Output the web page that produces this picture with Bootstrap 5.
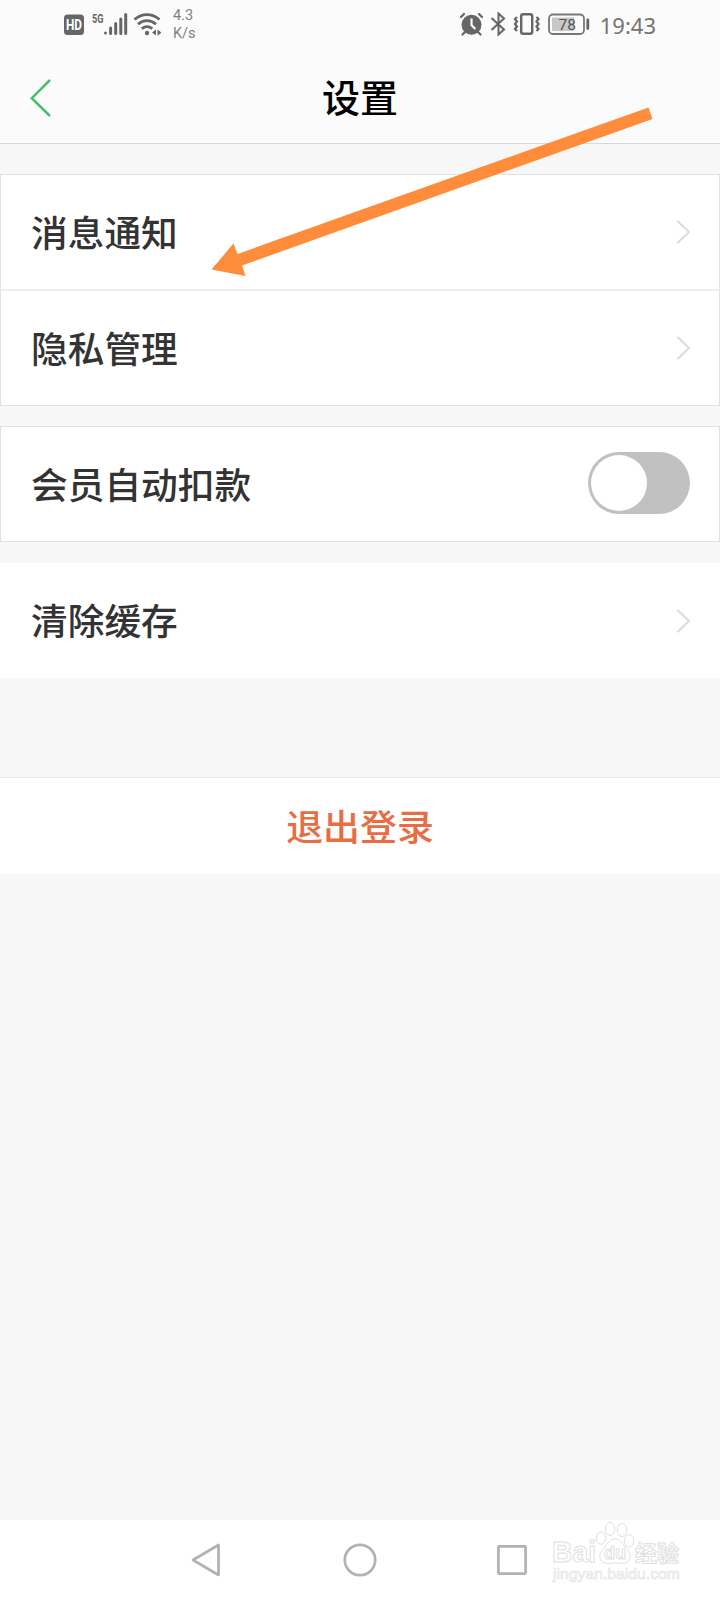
<!DOCTYPE html>
<html lang="zh-CN">
<head>
<meta charset="utf-8">
<meta name="viewport" content="width=device-width, initial-scale=1">
<title>设置</title>
<link rel="stylesheet" href="https://cdn.jsdelivr.net/npm/bootstrap@5.3.0/dist/css/bootstrap.min.css">
<style>
  body { background: #f7f7f7; font-family: "Liberation Sans", "Noto Sans CJK SC", sans-serif; color: #333; }
  .phone { width: 720px; height: 1600px; overflow: hidden; }
  svg { display: block; flex: none; }
  .top-area { background: #fbfbfb; border-bottom: 1px solid #d8d8d8; height: 144px; }
  .status-bar { height: 48px; padding: 0 64px 0 63px; color: #666; }
  .net-speed { font: 14.5px/18px Roboto, sans-serif; color: #808080; margin: 1px 0 0 12px; }
  .clock { font: 22px/48px "Noto Sans", sans-serif; color: #737373; margin: 2px 0 0 10px; }
  .title-bar { height: 95px; padding: 0 29px; }
  .page-title { font-size: 38px; line-height: 56px; color: #000; font-weight: 500; margin: 23px 0 0; }
  .group { border: 1px solid #e2e2e2; border-radius: 0; background: #fff; }
  .group .list-group-item { border: 0; border-radius: 0; height: 114px; padding: 0 29px 0 30px; font-size: 36.7px; line-height: 54px; color: #333; font-weight: 500; background: #fff; }
  .group .list-group-item + .list-group-item { border-top: 2px solid #ededed; height: 116px; }
  .group.edgeless { border: 0; }
  .group.edgeless .list-group-item { height: 115px; padding: 0 30px 0 31px; }
  .row-label { padding-top: 5px; }
  .toggle { width: 102px; height: 62px; border-radius: 31px; background: #c1c1c1; padding: 3px; margin-top: -2px; }
  .knob { width: 56px; height: 56px; border-radius: 50%; background: #fff; }
  .logout { height: 97px; border: 0; border-top: 1px solid #e7e7e7; border-radius: 0; background: #fff; color: #e96d43; font-size: 36.9px; font-weight: 500; line-height: 54px; padding: 5px 0 0; }
  .logout:hover { color: #e96d43; background: #fff; }
  .nav-area { height: 80px; background: #fff; padding-left: 191px; }
  .arrow-mark { left: 205px; top: 100px; }
  .watermark { left: 548px; top: 1518px; }
</style>
</head>
<body>
<div class="phone position-relative d-flex flex-column">
  <header class="top-area">
    <div class="status-bar d-flex align-items-center">
      <svg width="98" height="30" viewBox="63 9 98 30" fill="none" stroke="#666">
        <rect x="64" y="14.500" width="20" height="20.500" rx="3.500" fill="#666" stroke="none"/>
        <text x="66" y="30" font-family="Roboto" font-weight="700" font-size="14" textLength="16" lengthAdjust="spacingAndGlyphs" fill="#fff" stroke="none">HD</text>
        <text x="92" y="22.500" font-family="Roboto" font-weight="700" font-size="12.500" textLength="11.500" lengthAdjust="spacingAndGlyphs" fill="#666" stroke="none">5G</text>
        <g stroke-width="3" stroke-linecap="round"><path d="M105.500 33v.1M110.600 28v5.500M115.700 23.500v10M120.800 19v14.500M125.700 14.500v19"/></g>
        <g stroke-width="2.700"><path d="M134.500 19.500c7.500-6.500 17.500-6.500 25 0M138 24.200c5.500-4.800 12.500-4.800 18 0M141.800 28.600c3.300-2.600 7.200-2.600 10.500 0"/></g>
        <circle cx="147" cy="33" r="2.200" fill="#666" stroke="none"/>
        <path d="M156 29.500v6l-4-3zM157.500 29.500v6l4-3z" fill="#666" stroke="none"/>
      </svg>
      <div class="net-speed">4.3<br>K/s</div>
      <div class="ms-auto d-flex align-items-center">
        <svg width="131" height="30" viewBox="459 9 131 30" fill="none" stroke="#666">
          <circle cx="471.500" cy="24.800" r="10" fill="#666" stroke="none"/>
          <path d="M461 17l3-3M482 17l-3-3M465 32l-2.500 2.500M478 32l2.500 2.500" stroke-width="2.300" stroke-linecap="round"/>
          <path d="M471.500 18.500v6.500l3.800 4" stroke="#fbfbfb" stroke-width="2.200"/>
          <path d="M491.500 18l12.500 11.500-5.500 5v-21l5.500 5-12.500 11.500" stroke-width="2"/>
          <rect x="521.200" y="14.300" width="11" height="19.400" rx="2" stroke-width="2.400"/>
          <path d="M517 17l-2 2 2 2.500-2 2.500 2 2.500-2 2.500 2 2M536.500 17l2 2-2 2.500 2 2.500-2 2.500 2 2.500-2 2" stroke-width="2.200"/>
          <rect x="549" y="14.500" width="35" height="19.500" rx="4" stroke-width="1.800" stroke="#777"/>
          <rect x="552" y="17.500" width="22" height="13.500" fill="#c8c8c8" stroke="none"/>
          <path d="M587.800 20v8.500" stroke-width="2.800" stroke-linecap="round"/>
          <text x="567.200" y="29.700" text-anchor="middle" font-family="Roboto" font-size="15.500" fill="#555" stroke="none">78</text>
        </svg>
        <span class="clock">19:43</span>
      </div>
    </div>
    <div class="title-bar d-flex justify-content-between">
      <svg class="mt-4" width="24" height="50" viewBox="29 72 24 50"><path d="M50 80L31.800 98.200 50 116" fill="none" stroke="#48bd6c" stroke-width="2.500"/></svg>
      <h1 class="page-title">设置</h1>
      <span style="width:24px"></span>
    </div>
  </header>

  <main class="flex-grow-1">
    <div class="group list-group" style="margin-top:30px">
      <a class="list-group-item d-flex align-items-center justify-content-between"><span class="row-label">消息通知</span>
        <svg width="14" height="26" viewBox="0 0 14 26"><path d="M2 2.500L13 13 2 23.500" fill="none" stroke="#dcdcdc" stroke-width="2.200" stroke-linecap="round"/></svg></a>
      <a class="list-group-item d-flex align-items-center justify-content-between"><span class="row-label">隐私管理</span>
        <svg width="14" height="26" viewBox="0 0 14 26"><path d="M2 2.500L13 13 2 23.500" fill="none" stroke="#dcdcdc" stroke-width="2.200" stroke-linecap="round"/></svg></a>
    </div>
    <div class="group list-group" style="margin-top:20px">
      <div class="list-group-item d-flex align-items-center justify-content-between"><span class="row-label">会员自动扣款</span>
        <span class="toggle" role="switch" aria-checked="false"><span class="knob d-block"></span></span></div>
    </div>
    <div class="group edgeless list-group" style="margin-top:21px">
      <a class="list-group-item d-flex align-items-center justify-content-between"><span class="row-label">清除缓存</span>
        <svg width="14" height="26" viewBox="0 0 14 26"><path d="M2 2.500L13 13 2 23.500" fill="none" stroke="#dcdcdc" stroke-width="2.200" stroke-linecap="round"/></svg></a>
    </div>
    <button class="logout btn w-100 d-block" style="margin-top:99px">退出登录</button>
  </main>

  <nav class="nav-area d-flex">
    <svg width="340" height="80" viewBox="191 1520 340 80" fill="none" stroke="#b2b2b2" stroke-width="2.700" stroke-linejoin="round">
      <path d="M193 1560L218.500 1545v30z"/>
      <circle cx="360" cy="1560" r="15.200"/>
      <rect x="498.400" y="1546.400" width="27.200" height="27.200" rx="1"/>
    </svg>
  </nav>

  <svg class="arrow-mark position-absolute" width="460" height="180" viewBox="205 100 460 180"><path fill="#ff8c3a" d="M648.500 107.500L652.500 119 242 265.500 245.500 276 211.500 269.500 233.500 243.500 237.500 254z"/></svg>

  <svg class="watermark position-absolute" width="140" height="70" viewBox="548 1518 140 70" fill="#fff" stroke="#dfdfdf" stroke-width="1">
    <text x="552" y="1562" font-family="Liberation Sans" font-weight="700" font-size="29" textLength="44" lengthAdjust="spacingAndGlyphs">Bai</text>
    <path d="M615 1539c5 0 7 4 10 8s6 6 5 11-6 6-15 5c-9 1-14 0-15-5s2-7 5-11 5-8 10-8z"/>
    <ellipse cx="601" cy="1538" rx="4.800" ry="6.200"/><ellipse cx="610" cy="1529" rx="4.800" ry="6.500"/>
    <ellipse cx="622" cy="1530" rx="4.800" ry="6.500"/><ellipse cx="629" cy="1541" rx="4.800" ry="6.200"/>
    <text x="604" y="1559" font-family="Liberation Sans" font-weight="700" font-size="19" textLength="22" lengthAdjust="spacingAndGlyphs">du</text>
    <text x="635" y="1561" font-family="Noto Sans CJK SC" font-weight="700" font-size="22" textLength="44">经验</text>
    <text x="553" y="1579" font-family="Liberation Sans" font-size="15" textLength="127" lengthAdjust="spacingAndGlyphs" stroke="#e4e4e4" stroke-width=".7">jingyan.baidu.com</text>
  </svg>
</div>
<script src="https://cdn.jsdelivr.net/npm/bootstrap@5.3.0/dist/js/bootstrap.bundle.min.js"></script>
</body>
</html>
